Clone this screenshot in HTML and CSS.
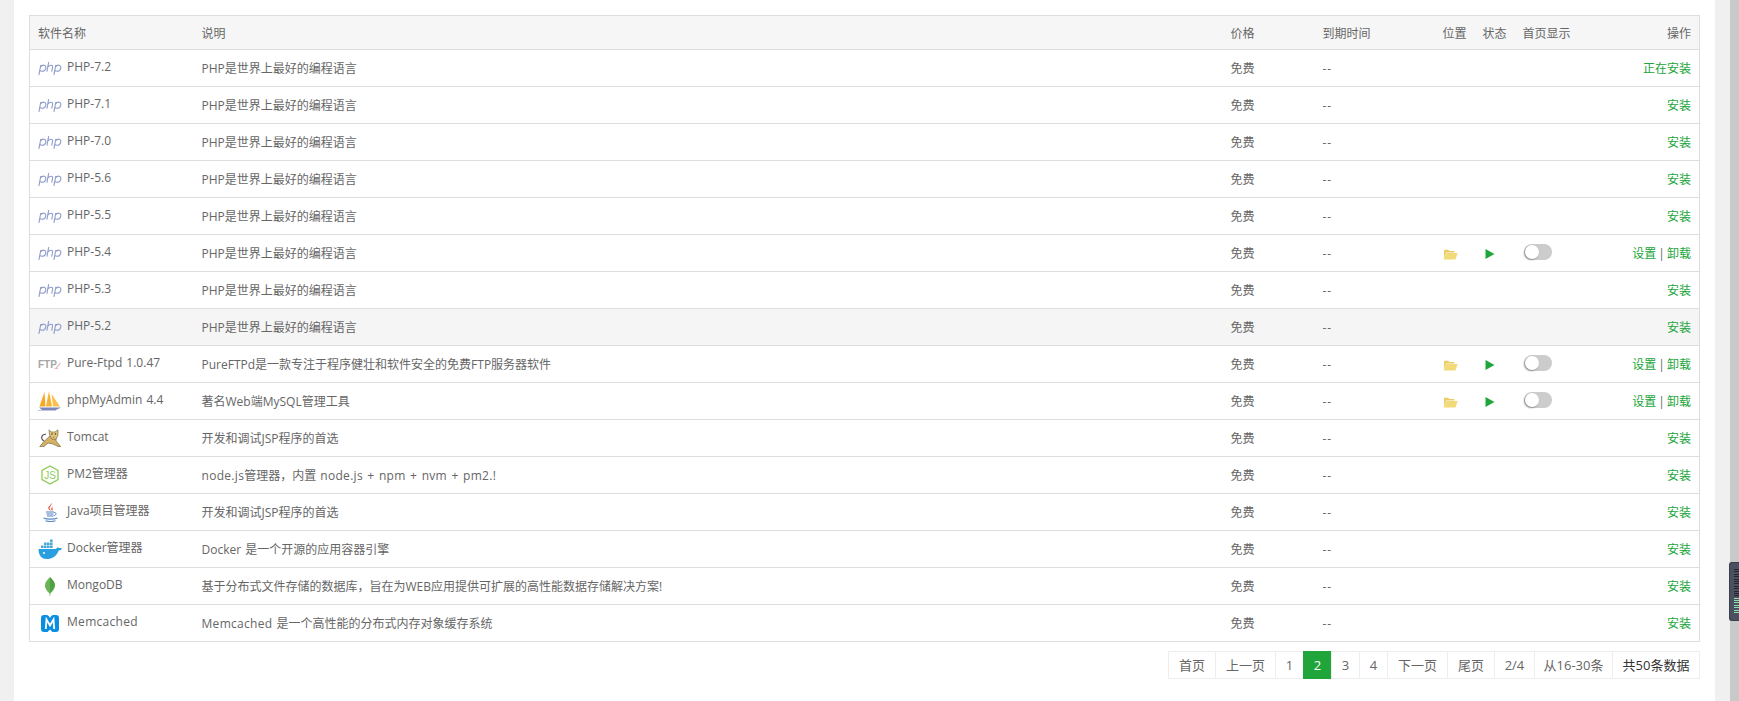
FILE: index.html
```html
<!DOCTYPE html>
<html lang="zh-CN">
<head>
  <meta charset="UTF-8">
  <meta name="viewport" content="width=device-width, initial-scale=1.0">
  <title>软件管理</title>
  <link rel="stylesheet" href="styles.css">
</head>
<body>
  <svg class="defs" width="0" height="0">
    <symbol id="folder" viewBox="0 0 15 11">
      <path d="M1 1.500C1 1 1.400.7 1.800.7h3.400l1 1.200h4.600c.4 0 .7.3.7.7v.9H3.200L1 9.500z" fill="#eacb66"/>
      <path d="M3.400 4h11.300l-2.300 6.600H.6z" fill="#f3da78"/>
    </symbol>
    <symbol id="play" viewBox="0 0 10 10">
      <path d="M.5 0v10l9-5z" fill="#20a53a"/>
    </symbol>
    <symbol id="php" viewBox="0 0 24 13">
      <g fill="none" stroke="#8e9cc9" stroke-width="1.100">
        <path d="M2.800 3 .9 12.800M2.400 5c1-1.400 2.400-2 3.700-1.800 1.500.3 2 1.500 1.600 3.100-.4 1.700-1.800 3-3.500 3-1 0-1.900-.4-2.300-1.100"/>
        <path d="M10.700.2 8.900 9.600M9.900 5c1.100-1.300 2.200-1.900 3.300-1.800 1.200.1 1.600.8 1.400 1.800l-.9 4.600"/>
        <path d="M17.800 3 15.900 12.800M17.400 5c1-1.400 2.400-2 3.700-1.800 1.500.3 2 1.500 1.600 3.100-.4 1.700-1.800 3-3.500 3-1 0-1.900-.4-2.300-1.100"/>
      </g>
    </symbol>
  </svg>

  <div class="layout">
    <div class="side"></div>
    <div class="main">
      <table class="soft-table">
        <colgroup>
          <col class="c-name"><col class="c-desc"><col class="c-price"><col class="c-time">
          <col class="c-pos"><col class="c-state"><col class="c-home"><col>
        </colgroup>
        <thead>
          <tr>
            <th>软件名称</th><th>说明</th><th>价格</th><th>到期时间</th>
            <th>位置</th><th>状态</th><th>首页显示</th><th class="right">操作</th>
          </tr>
        </thead>
        <tbody>
          <tr>
            <td><div class="soft"><span class="ico"><svg width="24" height="13"><use href="#php"/></svg></span><span class="name">PHP-7.2</span></div></td>
            <td>PHP是世界上最好的编程语言</td><td>免费</td><td>--</td><td></td><td></td><td></td>
            <td class="right"><a class="link">正在安装</a></td>
          </tr>
          <tr>
            <td><div class="soft"><span class="ico"><svg width="24" height="13"><use href="#php"/></svg></span><span class="name">PHP-7.1</span></div></td>
            <td>PHP是世界上最好的编程语言</td><td>免费</td><td>--</td><td></td><td></td><td></td>
            <td class="right"><a class="link">安装</a></td>
          </tr>
          <tr>
            <td><div class="soft"><span class="ico"><svg width="24" height="13"><use href="#php"/></svg></span><span class="name">PHP-7.0</span></div></td>
            <td>PHP是世界上最好的编程语言</td><td>免费</td><td>--</td><td></td><td></td><td></td>
            <td class="right"><a class="link">安装</a></td>
          </tr>
          <tr>
            <td><div class="soft"><span class="ico"><svg width="24" height="13"><use href="#php"/></svg></span><span class="name">PHP-5.6</span></div></td>
            <td>PHP是世界上最好的编程语言</td><td>免费</td><td>--</td><td></td><td></td><td></td>
            <td class="right"><a class="link">安装</a></td>
          </tr>
          <tr>
            <td><div class="soft"><span class="ico"><svg width="24" height="13"><use href="#php"/></svg></span><span class="name">PHP-5.5</span></div></td>
            <td>PHP是世界上最好的编程语言</td><td>免费</td><td>--</td><td></td><td></td><td></td>
            <td class="right"><a class="link">安装</a></td>
          </tr>
          <tr>
            <td><div class="soft"><span class="ico"><svg width="24" height="13"><use href="#php"/></svg></span><span class="name">PHP-5.4</span></div></td>
            <td>PHP是世界上最好的编程语言</td><td>免费</td><td>--</td>
            <td><svg class="folder" width="15" height="11"><use href="#folder"/></svg></td>
            <td><svg class="play" width="10" height="10"><use href="#play"/></svg></td>
            <td><span class="toggle"></span></td>
            <td class="right ops"><a class="link">设置</a> | <a class="link">卸载</a></td>
          </tr>
          <tr>
            <td><div class="soft"><span class="ico"><svg width="24" height="13"><use href="#php"/></svg></span><span class="name">PHP-5.3</span></div></td>
            <td>PHP是世界上最好的编程语言</td><td>免费</td><td>--</td><td></td><td></td><td></td>
            <td class="right"><a class="link">安装</a></td>
          </tr>
          <tr class="hover">
            <td><div class="soft"><span class="ico"><svg width="24" height="13"><use href="#php"/></svg></span><span class="name">PHP-5.2</span></div></td>
            <td>PHP是世界上最好的编程语言</td><td>免费</td><td>--</td><td></td><td></td><td></td>
            <td class="right"><a class="link">安装</a></td>
          </tr>
          <tr>
            <td><div class="soft"><span class="ico">
              <svg width="24" height="12" viewBox="0 0 24 12">
                <text class="ftp-text" x="0" y="10">FTP</text>
                <path d="M18 10 22.500 5" stroke="#e9a3a3" stroke-width="1.100" fill="none"/>
                <path d="M16.500 10.500h3.500" stroke="#e9b8b8" stroke-width="1"/>
              </svg>
            </span><span class="name">Pure-Ftpd 1.0.47</span></div></td>
            <td>PureFTPd是一款专注于程序健壮和软件安全的免费FTP服务器软件</td><td>免费</td><td>--</td>
            <td><svg class="folder" width="15" height="11"><use href="#folder"/></svg></td>
            <td><svg class="play" width="10" height="10"><use href="#play"/></svg></td>
            <td><span class="toggle"></span></td>
            <td class="right ops"><a class="link">设置</a> | <a class="link">卸载</a></td>
          </tr>
          <tr>
            <td><div class="soft"><span class="ico">
              <svg width="24" height="20" viewBox="0 0 24 20">
                <path d="M6.500 1 1.500 15.500H7.500z" fill="#f7a823"/>
                <path d="M11 0 8 15.500h6z" fill="#f5b335"/>
                <path d="M13.500 3 15 15.500h7z" fill="#f9c04e"/>
                <path d="M1 16.500h22L18 19H4z" fill="#7d86b8"/>
                <path d="M0 19h18v.8H0z" fill="#b6bbd8"/>
              </svg>
            </span><span class="name">phpMyAdmin 4.4</span></div></td>
            <td>著名Web端MySQL管理工具</td><td>免费</td><td>--</td>
            <td><svg class="folder" width="15" height="11"><use href="#folder"/></svg></td>
            <td><svg class="play" width="10" height="10"><use href="#play"/></svg></td>
            <td><span class="toggle"></span></td>
            <td class="right ops"><a class="link">设置</a> | <a class="link">卸载</a></td>
          </tr>
          <tr>
            <td><div class="soft"><span class="ico">
              <svg width="22" height="18" viewBox="0 0 22 18">
                <path d="M5 12C1 9.500 2.500 5 7 5.200" fill="none" stroke="#555" stroke-width="1.100"/>
                <path d="M11 7 5 12.500.7 17.500H5L9 14l5 1 5 2.500h2.700L17 12V9z" fill="#d4b163" stroke="#6b5a30" stroke-width=".6"/>
                <path d="M10 .8 12 3h4l3-2.200V6l-2 4.200h-4L10.500 6z" fill="#e3c67c" stroke="#6b5a30" stroke-width=".6"/>
                <path d="M13 5h.01M16.500 5h.01" stroke="#333" stroke-width="1.500" stroke-linecap="round"/>
                <path d="M13.800 7.800h2l-1 1z" fill="#554"/>
              </svg>
            </span><span class="name">Tomcat</span></div></td>
            <td>开发和调试JSP程序的首选</td><td>免费</td><td>--</td><td></td><td></td><td></td>
            <td class="right"><a class="link">安装</a></td>
          </tr>
          <tr>
            <td><div class="soft"><span class="ico">
              <svg width="18" height="20" viewBox="0 0 18 20">
                <path d="M9 1 17 5.500v9L9 19 1 14.500v-9z" fill="#fff" stroke="#8fcc57" stroke-width="1.300"/>
                <text class="js-text" x="9" y="13.500">JS</text>
              </svg>
            </span><span class="name">PM2管理器</span></div></td>
            <td><span class="en">node.js</span>管理器，内置 <span class="en">node.js + npm + nvm + pm2.!</span></td><td>免费</td><td>--</td><td></td><td></td><td></td>
            <td class="right"><a class="link">安装</a></td>
          </tr>
          <tr>
            <td><div class="soft"><span class="ico">
              <svg width="15" height="19" viewBox="0 0 15 19">
                <path d="M8.500 0C9.500 2 6 3.500 6.500 5.500c.2 1 1 1.500 1.500 2.500-1.800-1-3-2-2.700-3.500C5.600 3 8.300 2 8.500 0zM10 3.500c-1.200 1-2 1.700-1.700 2.900.2.700.6 1 .6 1.600.9-.8 1-1.500.6-2.300-.3-.7-.2-1.300.5-2.200z" fill="#e2452f"/>
                <path d="M3 9h8M3.500 11h7M4 13h6" stroke="#4e7fc2" stroke-width="1.100" fill="none"/>
                <path d="M11 9.500c3 0 2.500 3-.5 3.300" stroke="#4e7fc2" stroke-width="1" fill="none"/>
                <path d="M.5 15c3 1.500 11 1.500 14 0M2.500 17.800c3 .9 7 .9 10 0" stroke="#5a8ac9" stroke-width="1.100" fill="none"/>
              </svg>
            </span><span class="name">Java项目管理器</span></div></td>
            <td>开发和调试JSP程序的首选</td><td>免费</td><td>--</td><td></td><td></td><td></td>
            <td class="right"><a class="link">安装</a></td>
          </tr>
          <tr>
            <td><div class="soft"><span class="ico">
              <svg width="24" height="20" viewBox="0 0 24 20">
                <path d="M.5 10h17.500c.5-1.500 2.500-2 3-1 1-.3 2.500 0 3 .8-.8 1.400-2.200 1.700-3.300 1.600C19 16.500 14.500 20 8.500 20 3 20 .5 15.500.5 10z" fill="#2a9fe0"/>
                <path d="M3 6.500h2.600v2.600H3zM6 6.500h2.600v2.600H6zM9 6.500h2.600v2.600H9zM12 6.500h2.600v2.600H12zM6 3.500h2.600v2.600H6zM9 3.500h2.600v2.600H9zM12 3.500h2.600v2.600H12zM12 .5h2.600v2.600H12z" fill="#4aa8d8"/>
                <circle cx="6" cy="14" r="1" fill="#fff"/>
              </svg>
            </span><span class="name">Docker管理器</span></div></td>
            <td>Docker 是一个开源的应用容器引擎</td><td>免费</td><td>--</td><td></td><td></td><td></td>
            <td class="right"><a class="link">安装</a></td>
          </tr>
          <tr>
            <td><div class="soft"><span class="ico">
              <svg width="10" height="19" viewBox="0 0 10 19">
                <path d="M5 0c2.500 2.500 5 5 5 8.500S7 15 5.400 16.500L5.200 19h-.5l-.2-2.500C3 15 0 12 0 8.500S2.500 2.500 5 0z" fill="#6ab35a"/>
                <path d="M5 1 5.200 16 10 8.500C10 5 7.500 2.500 5 0z" fill="#439934" opacity=".7"/>
              </svg>
            </span><span class="name">MongoDB</span></div></td>
            <td>基于分布式文件存储的数据库，旨在为WEB应用提供可扩展的高性能数据存储解决方案!</td><td>免费</td><td>--</td><td></td><td></td><td></td>
            <td class="right"><a class="link">安装</a></td>
          </tr>
          <tr>
            <td><div class="soft"><span class="ico">
              <svg width="18" height="17" viewBox="0 0 18 17">
                <path d="M3 0h2.500C7 0 8 1 9 3c1-2 2-3 3.500-3H15c2 0 3 1.200 3 3v11c0 2-1 3-3 3h-3.500L9 14.500 6.500 17H3c-2 0-3-1-3-3V3c0-1.800 1-3 3-3z" fill="#0a8fe0"/>
                <path d="M4.800 14 5.500 4.500 9 10.500l3.500-6 .7 9.500" fill="none" stroke="#fff" stroke-width="1.800"/>
              </svg>
            </span><span class="name en">Memcached</span></div></td>
            <td><span class="en">Memcached</span> 是一个高性能的分布式内存对象缓存系统</td><td>免费</td><td>--</td><td></td><td></td><td></td>
            <td class="right"><a class="link">安装</a></td>
          </tr>
        </tbody>
      </table>

      <div class="pager">
        <a class="pg w-47">首页</a>
        <a class="pg w-60">上一页</a>
        <a class="pg w-28">1</a>
        <a class="pg w-28 on">2</a>
        <a class="pg w-28">3</a>
        <a class="pg w-28">4</a>
        <a class="pg w-60">下一页</a>
        <a class="pg w-47">尾页</a>
        <a class="pg w-40">2/4</a>
        <a class="pg w-78">从16-30条</a>
        <a class="pg w-88 total">共50条数据</a>
      </div>
    </div>
    <div class="side"></div>
    <div class="track"></div>
  </div>

  <div class="dock">
    <i></i><i></i><i></i><i></i><i></i><i></i><i></i><i></i><i></i><i></i><i></i><i></i>
    <i class="lit"></i><i class="lit"></i><i class="lit"></i><i class="lit"></i><i class="lit"></i><i class="lit"></i><i class="lit"></i>
  </div>
</body>
</html>
```

FILE: styles.css
```css
* {
  box-sizing: border-box;
}

html, body {
  height: 100%;
}

body {
  margin: 0;
  overflow: hidden;
  font-family: "Open Sans", "Noto Sans CJK SC", sans-serif;
  font-size: 12px;
  color: #666;
  background-color: #fff;
}

.defs {
  position: absolute;
}

.layout {
  display: flex;
  height: 701px;
}

.layout > .side:first-child {
  width: 14px;
  background-color: #f0f0f0;
}

.main {
  width: 1701px;
  padding: 15px 15px 0 15px;
  background-color: #fff;
}

.layout > .side:nth-child(3) {
  width: 15px;
  background-color: #f0f0f0;
}

.track {
  width: 9px;
  background-color: #c9c9c9;
}

.soft-table {
  width: 100%;
  table-layout: fixed;
  border-collapse: collapse;
  border: 1px solid #ddd;
}

.c-name { width: 164px; }
.c-desc { width: 1029px; }
.c-price { width: 92px; }
.c-time { width: 120px; }
.c-pos { width: 40px; }
.c-state { width: 40px; }
.c-home { width: 70px; }

.soft-table th {
  height: 34px;
  padding: 0 8px;
  font-weight: normal;
  text-align: left;
  background-color: #f6f6f6;
  border-bottom: 1px solid #ddd;
}

.soft-table td {
  height: 37px;
  padding: 0 8px;
  border-bottom: 1px solid #ddd;
  white-space: nowrap;
  word-spacing: 1px;
}

.soft-table td:nth-child(4) {
  letter-spacing: 1px;
}

.soft-table .right {
  text-align: right;
}

.soft-table .ops {
  word-spacing: -1px;
}

.soft-table .hover td {
  background-color: #f5f5f5;
}

.soft {
  display: flex;
  align-items: center;
  gap: 5px;
}

.name {
  margin-bottom: 4px;
}

.en {
  letter-spacing: 0.3px;
}

.ico {
  display: flex;
  align-items: center;
  justify-content: center;
  width: 24px;
  height: 24px;
}

.ftp-text {
  font-family: "Liberation Sans", sans-serif;
  font-size: 10px;
  font-weight: bold;
  fill: #a5a5a5;
}

.js-text {
  font-family: "Liberation Sans", sans-serif;
  font-size: 10px;
  text-anchor: middle;
  fill: #8fcc57;
}

.link {
  color: #20a53a;
}

.folder, .play {
  display: block;
  margin-top: 2px;
}

.play {
  margin-left: 2px;
}

.toggle {
  display: block;
  position: relative;
  width: 28px;
  height: 16px;
  margin: -2px 0 0 1px;
  border-radius: 8px;
  background-color: #ccc;
}

.toggle::after {
  content: "";
  position: absolute;
  left: 1px;
  top: 1px;
  width: 14px;
  height: 14px;
  border-radius: 50%;
  background-color: #fff;
  box-shadow: -1px 1px 2px rgba(0, 0, 0, 0.35);
}

.pager {
  display: flex;
  justify-content: flex-end;
  margin-top: 9px;
}

.pg {
  display: block;
  height: 28px;
  line-height: 26px;
  font-size: 13px;
  text-align: center;
  color: #666;
  background-color: #fff;
  border: 1px solid #eee;
  border-right: none;
}

.pg:last-child {
  border-right: 1px solid #eee;
}

.pg.on {
  color: #fff;
  background-color: #20a53a;
  border-color: #20a53a;
}

.pg.total {
  color: #333;
}

.w-28 { width: 28px; }
.w-40 { width: 40px; }
.w-47 { width: 47px; }
.w-60 { width: 60px; }
.w-78 { width: 78px; }
.w-88 { width: 88px; }

.dock {
  position: absolute;
  left: 1729px;
  top: 562px;
  width: 10px;
  height: 59px;
  padding: 6px 0 0 4px;
  background-color: #4a5060;
  border: 1px solid #3a3f4c;
  border-right: none;
  border-radius: 3px 0 0 3px;
}

.dock i {
  display: block;
  width: 5px;
  height: 1px;
  margin-bottom: 1.4px;
  background-color: #23262f;
}

.dock i.lit {
  background-color: #8fe0b0;
}
```
